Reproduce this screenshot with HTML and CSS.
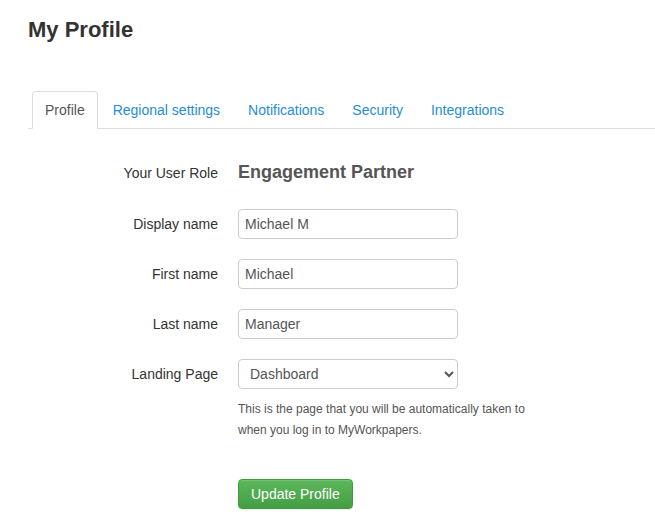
FILE: index.html
```html
<!DOCTYPE html>
<html>
<head>
<meta charset="utf-8">
<link rel="stylesheet" href="styles.css">
</head>
<body>
<div class="page">
  <h1 class="title">My Profile</h1>
  <ul class="tabs">
    <li class="tab active"><a>Profile</a></li>
    <li class="tab"><a>Regional settings</a></li>
    <li class="tab"><a>Notifications</a></li>
    <li class="tab"><a>Security</a></li>
    <li class="tab"><a>Integrations</a></li>
  </ul>
  <form class="form">
    <div class="row role-row">
      <label class="label">Your User Role</label>
      <div class="role">Engagement Partner</div>
    </div>
    <div class="row">
      <label class="label">Display name</label>
      <input class="control" type="text" value="Michael M">
    </div>
    <div class="row">
      <label class="label">First name</label>
      <input class="control" type="text" value="Michael">
    </div>
    <div class="row">
      <label class="label">Last name</label>
      <input class="control" type="text" value="Manager">
    </div>
    <div class="row select-row">
      <label class="label">Landing Page</label>
      <select class="control select">
        <option>Dashboard</option>
      </select>
    </div>
    <div class="row help-row">
      <span></span>
      <p class="help">This is the page that you will be automatically taken to when you log in to MyWorkpapers.</p>
    </div>
    <div class="row button-row">
      <span></span>
      <div><button type="button" class="btn">Update Profile</button></div>
    </div>
  </form>
</div>
</body>
</html>
```

FILE: styles.css
```css
html, body {
  margin: 0;
  padding: 0;
  background: #fff;
}
body {
  font-family: "Liberation Sans", Arial, sans-serif;
  font-size: 14px;
  line-height: 20px;
  color: #333;
}
.page {
  padding: 18px 0 0 28px;
}
.title {
  margin: 0;
  font-size: 22px;
  line-height: 24px;
  font-weight: bold;
  color: #333;
}
.tabs {
  list-style: none;
  margin: 49px 0 0 0;
  padding: 0 0 0 4px;
  display: flex;
  border-bottom: 1px solid #ddd;
}
.tab {
  margin-right: 2px;
  margin-bottom: -1px;
}
.tab a {
  display: block;
  padding: 8px 12px;
  border: 1px solid transparent;
  border-radius: 4px 4px 0 0;
  color: #1f8dd6;
  line-height: 20px;
}
.tab.active a {
  color: #555;
  border-color: #ddd #ddd transparent #ddd;
  background: #fff;
}
.form {
  padding-top: 28px;
}
.row {
  display: grid;
  grid-template-columns: 190px 220px;
  column-gap: 20px;
  align-items: center;
  margin-bottom: 20px;
}
.role-row {
  height: 30px;
  align-items: baseline;
  align-content: center;
  margin-bottom: 22px;
}
.label {
  text-align: right;
  color: #333;
}
.role {
  font-size: 18px;
  font-weight: bold;
  color: #555;
}
.control {
  box-sizing: border-box;
  width: 220px;
  height: 30px;
  margin: 0;
  padding: 0 6px;
  border: 1px solid #ccc;
  border-radius: 4px;
  font-family: "Liberation Sans", Arial, sans-serif;
  font-size: 14px;
  color: #555;
  background: #fff;
}
.select {
  padding: 0 6px 0 7px;
}
.select-row {
  margin-bottom: 10px;
}
.help-row {
  margin-bottom: 0;
}
.help {
  margin: 0;
  width: 300px;
  font-size: 12px;
  line-height: 21px;
  color: #555;
}
.button-row {
  margin-top: 38px;
}
.btn {
  height: 30px;
  padding: 0 12px;
  border: 1px solid #3e9a3e;
  border-radius: 4px;
  background: linear-gradient(to bottom, #5cb85c 0%, #449d44 100%);
  color: #fff;
  font-family: "Liberation Sans", Arial, sans-serif;
  font-size: 14px;
  line-height: 20px;
  box-shadow: inset 0 1px 0 rgba(255,255,255,0.15), 0 1px 1px rgba(0,0,0,0.075);
}
```
